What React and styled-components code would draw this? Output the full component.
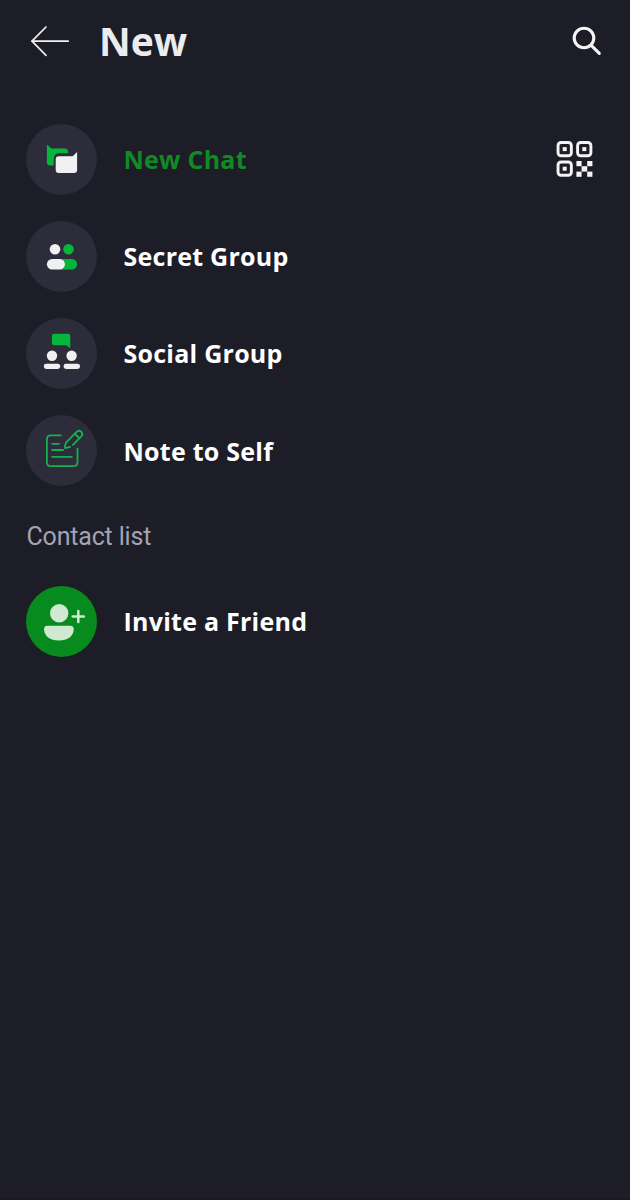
import React from 'react'
import styled, { createGlobalStyle } from "styled-components";

const BackIcon = () => (
  <svg width="40" height="32" viewBox="0 0 40 32" fill="none" stroke="#efeff1" strokeWidth="1.7" strokeLinecap="round" strokeLinejoin="round">
    <path d="M16 2L2 16.2L16 30.4" />
    <path d="M2 16.2H38.2" />
  </svg>
)

const SearchIcon = () => (
  <svg width="32" height="32" viewBox="0 0 32 32" fill="none" stroke="#f4f4f5" strokeWidth="3.1" strokeLinecap="round">
    <circle cx="14" cy="13" r="9.8" />
    <path d="M21.2 20.4L29.3 28.3" />
  </svg>
)

const QrIcon = () => (
  <svg width="37" height="36" viewBox="-0.6 0 37 36" fill="#f4f4f5">
    <g fill="none" stroke="#f4f4f5" strokeWidth="2.9">
      <rect x="1.45" y="1.45" width="13.3" height="13.3" rx="3" />
      <rect x="21" y="1.45" width="13.3" height="13.3" rx="3" />
      <rect x="1.45" y="21" width="13.3" height="13.3" rx="3" />
    </g>
    <rect x="6.1" y="6.1" width="4" height="4" />
    <rect x="25.7" y="6.1" width="4" height="4" />
    <rect x="6.1" y="25.7" width="4" height="4" />
    <rect x="19.8" y="20" width="5.2" height="5.2" />
    <rect x="30.6" y="20" width="5.2" height="5.2" />
    <rect x="25" y="25.2" width="5.6" height="5.4" />
    <rect x="19.8" y="30.6" width="5.2" height="5.2" />
    <rect x="30.6" y="30.6" width="5.2" height="5.2" />
  </svg>
)

const ChatIcon = () => (
  <svg width="71" height="71" viewBox="-0.5 0 71 71">
    <path fill="#06b53c" d="M20.4 20.4L25 24.6H38.6Q41.6 24.6 41.8 29.2H33.2Q27.4 29.2 27.2 35V41.6H23.4Q20.4 41.6 20.4 38.6Z" />
    <path fill="#f0f0f2" d="M50.6 28V45.8Q50.6 49 47.4 49H32.4Q29.2 49 29.2 45.8V35.4Q29.2 32.2 32.4 32.2H46.2Z" />
  </svg>
)

const SecretGroupIcon = () => (
  <svg width="71" height="71" viewBox="-0.5 0 71 71">
    <circle cx="28.5" cy="28.2" r="5.3" fill="#f0f0f2" />
    <circle cx="42" cy="28.2" r="5.3" fill="#06b53c" />
    <rect x="30" y="38" width="20.6" height="10.4" rx="5.2" fill="#06b53c" />
    <rect x="20.4" y="38" width="18" height="10.4" rx="5.2" fill="#f0f0f2" />
  </svg>
)

const SocialGroupIcon = () => (
  <svg width="71" height="71" viewBox="-0.5 0 71 71" fill="#f0f0f2">
    <path fill="#06b53c" d="M27.6 15.8H41.6Q43.8 15.8 43.8 18V30.2L39.6 27.3H27.6Q25.4 27.3 25.4 25.1V18Q25.4 15.8 27.6 15.8Z" />
    <circle cx="25.5" cy="37.8" r="5.2" />
    <circle cx="45.1" cy="37.8" r="5.2" />
    <rect x="17.3" y="45.7" width="16.4" height="5.3" rx="2.4" />
    <rect x="37.1" y="45.7" width="16.4" height="5.3" rx="2.4" />
  </svg>
)

const NoteIcon = () => (
  <svg width="71" height="71" viewBox="-0.5 0 71 71" fill="none" stroke="#18b04c" strokeWidth="1.8" strokeLinecap="round" strokeLinejoin="round">
    <path d="M34.2 20.4H24.4Q20.4 20.4 20.4 24.4V47.2Q20.4 51.2 24.4 51.2H47Q51 51.2 51 47.2V33.6" />
    <path d="M25.6 28.8H32.4M25.6 35H36.6M25.6 41.8H45.4" />
    <path d="M43.6 31.8L38.6 33.2Q38.2 29 40.6 26.4L50.2 16.8Q52.6 14.6 54.8 16.8Q57 19 54.8 21.4L46.4 29.8" />
    <path d="M48.4 18.8L52.8 23.2" />
  </svg>
)

const InviteIcon = () => (
  <svg width="71" height="71" viewBox="-0.5 0 71 71" fill="#cfe9d3">
    <circle cx="32.7" cy="27.2" r="9.2" />
    <path d="M21 39.8H43.6Q47.2 39.8 47.2 43.2C47.2 50 41.4 54.4 32.4 54.4S17.6 50 17.6 43.2Q17.6 39.8 21 39.8Z" />
    <path d="M51.8 24.9V35.9M46.2 30.4H57.4" stroke="#cfe9d3" strokeWidth="2.5" strokeLinecap="round" />
  </svg>
)

const actions = [
  { label: "New Chat", icon: <ChatIcon />, active: true, scan: true },
  { label: "Secret Group", icon: <SecretGroupIcon /> },
  { label: "Social Group", icon: <SocialGroupIcon /> },
  { label: "Note to Self", icon: <NoteIcon /> },
];

const App = () => {
  return (
    <Container>
      <GlobalStyle />
      <Header>
        <IconButton aria-label="Back"><BackIcon /></IconButton>
        <Title>New</Title>
        <IconButton aria-label="Search"><SearchIcon /></IconButton>
      </Header>
      <List>
        {actions.map(({ label, icon, active, scan }) => (
          <Row key={label}>
            <Avatar>{icon}</Avatar>
            <Label $active={active}>{label}</Label>
            {scan && <IconButton aria-label="Scan QR code"><QrIcon /></IconButton>}
          </Row>
        ))}
      </List>
      <SectionTitle>Contact list</SectionTitle>
      <Row>
        <Avatar $green><InviteIcon /></Avatar>
        <Label>Invite a Friend</Label>
      </Row>
    </Container>
  )
}

const GlobalStyle = createGlobalStyle`
  *{
    box-sizing:border-box;
  }
  body{
    margin:0;
    background-color:#1d1d27;
  }
`;

const Container = styled.div`
  min-height:100vh;
  background-color:#1d1d27;
  border-bottom:2px solid #1b1824;
  font-family:"Open Sans", "Noto Sans", sans-serif;
  color:#fff;
`;

const Header = styled.header`
  display:flex;
  align-items:center;
  height:82px;
  padding:0 28px 0 29.5px;
`;

const Title = styled.h1`
  flex:1;
  margin:0 0 0 29.5px;
  font-size:39px;
  line-height:52px;
  font-weight:700;
  color:#ececee;
`;

const IconButton = styled.button`
  display:flex;
  padding:0;
  border:none;
  background:none;
  cursor:pointer;
`;

const List = styled.div`
  padding-top:28.5px;
`;

const Row = styled.div`
  display:flex;
  align-items:center;
  height:97.2px;
  padding:0 37px 0 26.3px;
`;

const Avatar = styled.div`
  display:flex;
  flex:none;
  width:71px;
  height:71px;
  border-radius:50%;
  background-color:${({ $green }) => ($green ? "#078a1e" : "#2c2c3a")};
`;

const Label = styled.span`
  flex:1;
  margin-left:26.2px;
  font-size:25px;
  line-height:34px;
  font-weight:700;
  letter-spacing:0.25px;
  color:${({ $active }) => ($active ? "#118a26" : "#fff")};
`;

const SectionTitle = styled.h2`
  margin:0;
  padding:20px 26.5px 17px;
  height:73.4px;
  font-family:Roboto, sans-serif;
  font-size:25px;
  line-height:36px;
  font-weight:400;
  letter-spacing:-0.18px;
  color:#a3a3b5;
`;

export default App
